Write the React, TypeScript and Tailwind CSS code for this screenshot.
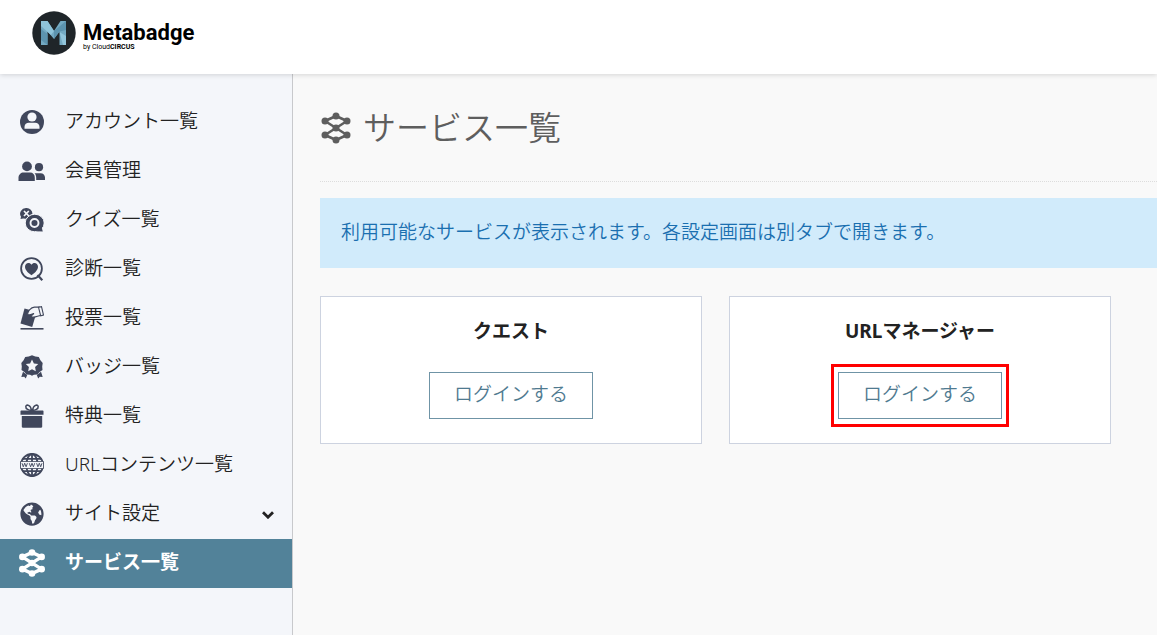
import type { ReactNode } from "react";
import { FaGlobeAmericas } from "react-icons/fa";

function AccountIcon() {
  return (
    <svg viewBox="0 0 24 24" className="size-6" fill="currentColor">
      <circle cx="12" cy="12" r="12" />
      <circle cx="12" cy="7" r="4.6" fill="#f4f6fa" />
      <path d="M4.500 18.800v-2c0-2.600 2.200-4 4.200-4h6.600c2 0 4.200 1.400 4.200 4v2z" fill="#f4f6fa" />
    </svg>
  );
}

function MembersIcon() {
  return (
    <svg viewBox="0 0 28 24" className="h-6 w-7" fill="currentColor">
      <circle cx="9" cy="7.4" r="4.9" />
      <path d="M0.5 22v-3.2C.5 15.500 3 13.500 5.500 13.500h6.500c3 0 4.800 2 4.800 5.300V22z" />
      <circle cx="21" cy="8.200" r="4.100" />
      <path d="M16.500 14.200h6c2.800 0 4.500 2 4.500 4.300V21h-8.800v-2.200c0-2-.6-3.600-1.700-4.600z" />
    </svg>
  );
}

function QuizIcon() {
  return (
    <svg viewBox="0 0 24 24" className="size-6" fill="currentColor">
      <path d="M6.200 0a6 5.700 0 0 0-5.200 8.700L.5 11l2.600-.5 3 .3 6.300-4.700A6 5.700 0 0 0 6.200 0z" />
      <path d="M4 3l4.800 5M8.800 3L4 8" stroke="#f4f6fa" strokeWidth="1.700" />
      <ellipse cx="14.700" cy="15" rx="9.500" ry="8.800" stroke="#f4f6fa" strokeWidth="1" />
      <path d="M16 23.200l6.800.3-1.200-4.300z" />
      <circle cx="14.500" cy="15" r="4" fill="none" stroke="#f4f6fa" strokeWidth="1.900" />
    </svg>
  );
}

function DiagnosisIcon() {
  return (
    <svg viewBox="0 0 24 24" className="size-6">
      <circle cx="11.500" cy="11.500" r="10.400" fill="none" stroke="currentColor" strokeWidth="1.800" />
      <path d="M17.500 18l4.800 5.200" fill="none" stroke="currentColor" strokeWidth="2.200" />
      <path d="M11.500 18.300C7 15 5 12.700 5 9.800c0-4 4.700-5 6.500-2 1.800-3 6.500-2 6.500 2 0 2.900-2 5.200-6.500 8.500z" fill="currentColor" />
    </svg>
  );
}

function VoteIcon() {
  return (
    <svg viewBox="0 0 24 24" className="size-6">
      <path d="M4.500 2.500l12.200 3.200-4.500 15.200L0.500 17.500z" fill="currentColor" />
      <path d="M9.500 3.800c1.500-1.600 3-2.500 5-2.700h5l2.500 8-4.500 1.200c-2.300.8-4.500 1.200-5.800.4-.7-.7.200-1.800 2.300-3.200-2.500.5-4.500 1.600-6 1.200-.9-.8.400-3.600 1.500-4.900z" fill="#f4f6fa" stroke="currentColor" strokeWidth="1.100" />
      <path d="M18.500 1.300l3-.6 2 8.400-2.800.7z" fill="#f4f6fa" stroke="currentColor" strokeWidth="1.100" />
      <path d="M0.500 22.800h23" stroke="currentColor" strokeWidth="1.600" />
    </svg>
  );
}

function BadgeIcon() {
  return (
    <svg viewBox="0 0 24 24" className="size-6" fill="currentColor">
      <path d="M12 0.300l3.300 1.200 3.500.6 1.600 3.100 2.300 2.700-.5 3.500.3 3.500-2.900 2.100-2.200 2.600-3.500.1-1.900 1-1.900-1-3.500-.1-2.200-2.600-2.900-2.100.3-3.500-.5-3.500 2.300-2.700 1.600-3.100 3.500-.6z" />
      <path d="M3 16.800l4.200 3.300-1.400 3.400-1.600-1.800-2.900.3zM21 16.800l-4.200 3.300 1.400 3.400 1.600-1.800 2.900.3z" />
      <path d="M12 4.500l1.900 3.900 4.300.6-3.100 3 .7 4.300-3.800-2-3.800 2 .7-4.300-3.100-3 4.300-.6z" fill="#f4f6fa" />
    </svg>
  );
}

function GiftIcon() {
  return (
    <svg viewBox="0 0 24 24" className="size-6" fill="currentColor">
      <path d="M1.500 6.500h21c.6 0 1 .4 1 1v3.200H.5V7.500c0-.6.4-1 1-1z" />
      <path d="M1.800 12h20.400v10.500c0 .8-.4 1.200-1.200 1.200H3c-.8 0-1.200-.4-1.200-1.200z" />
      <path d="M11.500 6.500C9 6.300 5.500 5 5.800 2.500c.4-2.500 4.900-1.800 5.700 4zM12.500 6.500c2.500-.2 6-1.500 5.700-4-.4-2.500-4.900-1.800-5.700 4z" fill="none" stroke="currentColor" strokeWidth="1.500" />
    </svg>
  );
}

function WebIcon() {
  return (
    <svg viewBox="0 0 24 24" className="size-6" fill="none" stroke="currentColor" strokeWidth="1.800">
      <circle cx="12" cy="12" r="11" />
      <ellipse cx="12" cy="12" rx="5.600" ry="11" />
      <path d="M12 1v22M3 5.800h18M3 18.200h18" />
      <path d="M0.500 8.500h23v7h-23z" fill="#f4f6fa" strokeWidth="0.800" />
      <path d="M2 10.200l1.300 3.600 1.400-3.600 1.400 3.600 1.300-3.600M9.300 10.200l1.300 3.600 1.400-3.600 1.400 3.600 1.300-3.600M16.600 10.200l1.300 3.600 1.400-3.600 1.400 3.600 1.300-3.600" strokeWidth="0.900" />
    </svg>
  );
}

function ServiceIcon({ className, bold }: { className: string; bold?: boolean }) {
  const dots = [
    [15, 4],
    [4, 9],
    [26, 9],
    [15, 16],
    [4, 23],
    [26, 23],
    [15, 28],
  ];
  return (
    <svg viewBox="0 0 30 32" className={className} fill="currentColor">
      <path
        d="M15 4L4 9l22 14-11 5L4 23 26 9z"
        fill="none"
        stroke="currentColor"
        strokeWidth={bold ? 4 : 2.6}
        strokeLinejoin="round"
      />
      {dots.map(([cx, cy]) => (
        <circle key={`${cx}-${cy}`} cx={cx} cy={cy} r={bold ? 3.8 : 3.5} />
      ))}
    </svg>
  );
}

function Chevron() {
  return (
    <svg viewBox="0 0 12 8" className="h-2 w-3" fill="none" stroke="currentColor" strokeWidth="2.800">
      <path d="M1 1.200l5 5 5-5" />
    </svg>
  );
}

function Logo() {
  return (
    <a href="#" className="flex items-center gap-[7px] text-black">
      <svg viewBox="0 0 44 44" className="size-11">
        <circle cx="22" cy="22" r="21.700" fill="#1f2529" />
        <path d="M9 34V10h6.500L22 20l6.500-10H34v24h-6.500V20.500L22 28l-6.500-7.500V34z" fill="#73a9c2" />
        <path d="M9 10h6.500L22 20l-3 4-10-9z" fill="#8fc4da" />
        <path d="M9 18l6.500 5v11L9 29zM34 10v9l-6.500 1.500L22 28v-8z" fill="#5c93ae" />
        <path d="M27.500 21L34 25v9h-3z" fill="#91c5db" />
      </svg>
      <span className="flex flex-col pt-1">
        <span className="font-[Roboto] text-[22px] leading-6 font-bold">Metabadge</span>
        <span className="font-[Roboto] text-[7px] leading-1">
          by Cloud<b>CIRCUS</b>
        </span>
      </span>
    </a>
  );
}

interface MenuItem {
  label: string;
  icon: ReactNode;
  active?: boolean;
  expandable?: boolean;
}

const menu: MenuItem[] = [
  { label: "アカウント一覧", icon: <AccountIcon /> },
  { label: "会員管理", icon: <MembersIcon /> },
  { label: "クイズ一覧", icon: <QuizIcon /> },
  { label: "診断一覧", icon: <DiagnosisIcon /> },
  { label: "投票一覧", icon: <VoteIcon /> },
  { label: "バッジ一覧", icon: <BadgeIcon /> },
  { label: "特典一覧", icon: <GiftIcon /> },
  { label: "URLコンテンツ一覧", icon: <WebIcon /> },
  { label: "サイト設定", icon: <FaGlobeAmericas className="size-6" />, expandable: true },
  { label: "サービス一覧", icon: <ServiceIcon className="h-7 w-7" bold />, active: true },
];

function Sidebar() {
  return (
    <nav className="w-[293px] shrink-0 border-r border-[#c8c9cc] bg-[#f4f6fa] pt-6">
      <ul>
        {menu.map((item) => (
          <li key={item.label}>
            <a
              href="#"
              className={`flex h-[49px] items-center px-[18px] ${
                item.active ? "bg-[#528299] font-bold text-white" : "font-[350] text-[#222222]"
              }`}
            >
              <span className={`flex w-7 justify-center pb-0.5 ${item.active ? "text-white" : "text-[#40475c]"}`}>
                {item.icon}
              </span>
              <span className="ml-[19px] flex-1 pb-1">{item.label}</span>
              {item.expandable && <Chevron />}
            </a>
          </li>
        ))}
      </ul>
    </nav>
  );
}

function ServiceCard({ name, highlighted }: { name: string; highlighted?: boolean }) {
  return (
    <section className="flex flex-col items-center border border-[#cdd3e0] bg-white pt-5 pb-6">
      <h2 className="leading-7 font-bold text-[#222222]">{name}</h2>
      <div className="relative mt-[27px]">
        <button className="h-[47px] border border-[#6f94a6] bg-white px-6 pb-1 font-[350] text-[#4f7a90]">
          ログインする
        </button>
        {highlighted && (
          <div className="pointer-events-none absolute -inset-x-[7px] -inset-y-2 border-3 border-[#ff0000]" />
        )}
      </div>
    </section>
  );
}

export default function App() {
  return (
    <div className="flex min-h-screen flex-col bg-[#f9f9f9] font-['Noto_Sans','Noto_Sans_CJK_JP',sans-serif] text-[19px] leading-7">
      <header className="relative flex h-[74px] items-center bg-white px-8 pb-2 shadow-[0_1px_5px_rgba(0,0,0,0.15)]">
        <Logo />
      </header>
      <div className="flex flex-1">
        <Sidebar />
        <main className="min-w-0 flex-1 pl-[27px]">
          <h1 className="flex items-center gap-[11px] border-b border-dotted border-[#dddddd] py-[27px] text-[33px] leading-[53px] font-[350] text-[#5e5e5e]">
            <ServiceIcon className="h-8 w-8" />
            サービス一覧
          </h1>
          <p className="mt-4 bg-[#d1ebfb] px-[21px] pt-5 pb-[22px] font-[350] text-[#1a6fb0]">
            利用可能なサービスが表示されます。各設定画面は別タブで開きます。
          </p>
          <div className="mt-7 grid grid-cols-2 gap-[27px] pr-[46px]">
            <ServiceCard name="クエスト" />
            <ServiceCard name="URLマネージャー" highlighted />
          </div>
        </main>
      </div>
    </div>
  );
}
